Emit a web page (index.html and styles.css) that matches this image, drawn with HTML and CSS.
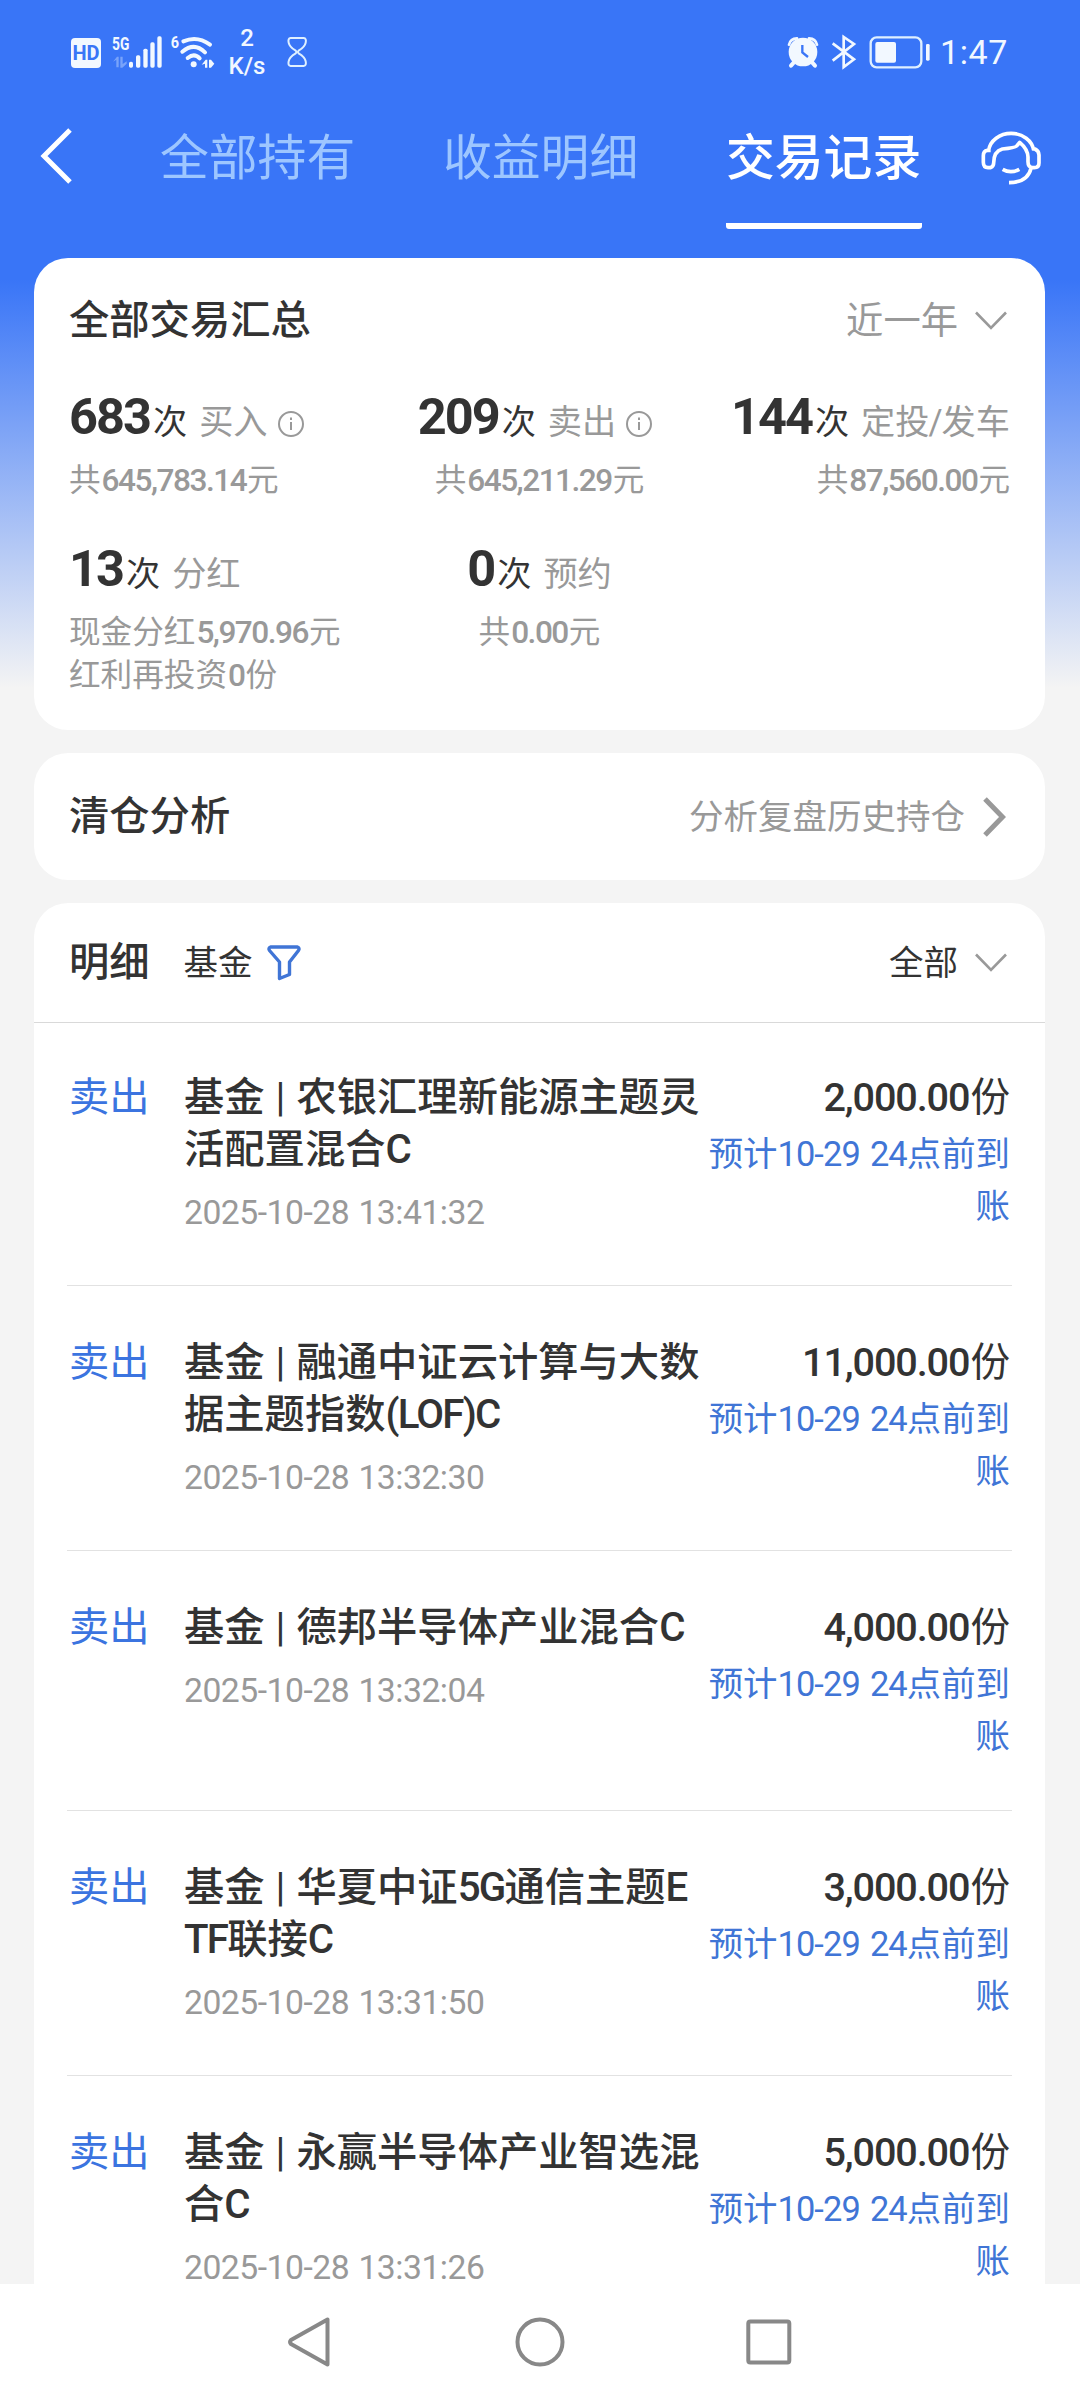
FILE: index.html
```html
<!DOCTYPE html>
<html lang="zh-CN">
<head>
<meta charset="utf-8">
<title>交易记录</title>
<link rel="stylesheet" href="styles.css">
</head>
<body>
<div class="screen">
  <div class="status">
    <div class="status-side">
      <span class="hd">HD</span>
      <svg class="signal" width="52" height="34" viewBox="212 74 156 102" fill="#f2f8ff">
        <text x="215" y="120" font-size="53" font-weight="700" textLength="52" lengthAdjust="spacingAndGlyphs">5G</text>
        <path d="M218 154l12-15h5v32h-7v-23zM240 139h7v22l12-8v7l-13 12h-6z" opacity=".35"/>
        <rect x="266" y="154" width="12" height="18" rx="5"/><rect x="287" y="135" width="13" height="37" rx="5"/><rect x="309" y="115" width="13" height="57" rx="5"/><rect x="330" y="96" width="13" height="76" rx="5"/><rect x="351" y="78" width="13" height="94" rx="5"/>
      </svg>
      <svg class="wifi" width="46" height="34" viewBox="390 74 138 102" fill="#f2f8ff">
        <text x="392" y="114" font-size="50" font-weight="700" textLength="25" lengthAdjust="spacingAndGlyphs">6</text>
        <path d="M430 93q42-18 80 10M427 124q36-30 68 2M443 143q20-16 36 1" fill="none" stroke="#f2f8ff" stroke-width="12" stroke-linecap="round"/>
        <circle cx="461" cy="162" r="9"/>
        <path d="M485 163l12-15h5v24h-7v-12zM507 148h6l10 12-10 12h-6z"/>
      </svg>
      <span class="speed"><span>2</span><span>K/s</span></span>
      <svg class="hourglass" width="22" height="32" viewBox="741 78 66 96" fill="none" stroke="#dff0ff" stroke-width="6"><path d="M755 84h39q9 1 6 14-3 13-20 23-6 5 0 10 17 10 20 23 3 13-6 14h-39q-9-1-6-14 3-13 20-23 6-5 0-10-17-10-20-23-3-13 6-14z"/></svg>
    </div>
    <div class="status-side status-right">
      <svg width="34" height="34" viewBox="81 74 102 102"><circle cx="132" cy="125" r="43" fill="#f2f8ff"/><path d="M90 103q4-18 24-19M174 103q-4-18-24-19" fill="none" stroke="#f2f8ff" stroke-width="8" stroke-linecap="round"/><path d="M104 157l-8 9M160 157l8 9" stroke="#f2f8ff" stroke-width="12" stroke-linecap="round"/><path d="M130 104v22l17 14" fill="none" stroke="#3975f7" stroke-width="7"/></svg>
      <svg class="bt" width="26" height="36" viewBox="213 74 78 108" fill="none" stroke="#f2f8ff" stroke-width="8"><path d="M218 102l64 48-31 23V83l31 21-64 50"/></svg>
      <svg class="battery" width="62" height="34" viewBox="325 75 186 102"><rect x="330" y="82" width="152" height="90" rx="18" fill="none" stroke="#dff0ff" stroke-width="7"/><rect x="344" y="96" width="62" height="62" rx="6" fill="#f2f8ff"/><rect x="496" y="102" width="11" height="50" rx="4" fill="#f2f8ff"/></svg>
      <span class="clock">1:47</span>
    </div>
  </div>

  <div class="nav">
    <svg class="back" width="32" height="56" viewBox="0 0 32 56" fill="none" stroke="#fff" stroke-width="5"><path d="M30 2L4 28l26 26"/></svg>
    <div class="tabs">
      <span class="tab">全部持有</span>
      <span class="tab">收益明细</span>
      <span class="tab active">交易记录</span>
    </div>
    <svg class="service" width="62" height="60" viewBox="660 350 186 180" fill="none" stroke="#fff" stroke-width="11" stroke-linejoin="round"><path d="M686 420a68 58 0 0 1 135 0M692 420h-10q-12 2-12 16v20q0 16 14 16h8q9-4 9-14 0-35 26-42 42-4 44-10l8-10q24 20 25 44v14q0 16 13 18h6q14 0 14-14v-24q0-12-12-18h-8M813 474q-10 42-66 43M728 477q24 14 50 0"/></svg>
  </div>

  <main class="cards">
    <section class="card summary">
      <div class="card-head">
        <h2>全部交易汇总</h2>
        <span class="period">近一年<svg class="down" width="32" height="20" viewBox="0 0 32 20"><path d="M1 1.500l15 15.500 15-15.500"/></svg></span>
      </div>
      <div class="stats">
        <div class="stat">
          <div class="line"><b>683</b><i>次</i>买入<svg class="info" width="28" height="28" viewBox="0 0 28 28"><circle cx="14" cy="14" r="12"/><path d="M14 12v8M14 7.500v2.500"/></svg></div>
          <div class="sum">共<span class="n">645,783.14</span>元</div>
        </div>
        <div class="stat mid">
          <div class="line"><b>209</b><i>次</i>卖出<svg class="info" width="28" height="28" viewBox="0 0 28 28"><circle cx="14" cy="14" r="12"/><path d="M14 12v8M14 7.500v2.500"/></svg></div>
          <div class="sum">共<span class="n">645,211.29</span>元</div>
        </div>
        <div class="stat end">
          <div class="line"><b>144</b><i>次</i>定投<span class="slash">/</span>发车</div>
          <div class="sum">共<span class="n">87,560.00</span>元</div>
        </div>
        <div class="stat">
          <div class="line"><b>13</b><i>次</i>分红</div>
          <div class="sum">现金分红<span class="n">5,970.96</span>元<br>红利再投资<span class="n">0</span>份</div>
        </div>
        <div class="stat mid">
          <div class="line"><b>0</b><i>次</i>预约</div>
          <div class="sum">共<span class="n">0.00</span>元</div>
        </div>
      </div>
    </section>

    <section class="card analysis">
      <h2>清仓分析</h2>
      <span class="more">分析复盘历史持仓<svg class="right" width="25" height="36" viewBox="0 0 25 36"><path d="M3 0l17.500 18L3 36"/></svg></span>
    </section>

    <section class="card detail">
      <div class="detail-head">
        <h2>明细</h2>
        <span class="kind">基金</span>
        <svg class="funnel" width="34" height="36" viewBox="0 0 34 36"><path d="M3.500 2h27q2.500 1 1 3.500L22.500 17v12.500L12.500 33.500V17L2.500 5.500Q1 3 3.500 2z"/></svg>
        <span class="all">全部<svg class="down" width="32" height="20" viewBox="0 0 32 20"><path d="M1 1.500l15 15.500 15-15.500"/></svg></span>
      </div>
      <div class="list">
        <div class="row">
          <span class="side">卖出</span>
          <div class="info-col"><div class="name">基金 <s>|</s> 农银汇理新能源主题灵<br>活配置混合<u>C</u></div><div class="time">2025-10-28 13:41:32</div></div>
          <div class="amt-col"><div class="amt"><b>2,000.00</b>份</div><div class="eta">预计<span>10-29 24</span>点前到<br>账</div></div>
        </div>
        <div class="row">
          <span class="side">卖出</span>
          <div class="info-col"><div class="name">基金 <s>|</s> 融通中证云计算与大数<br>据主题指数<u>(LOF)C</u></div><div class="time">2025-10-28 13:32:30</div></div>
          <div class="amt-col"><div class="amt"><b>11,000.00</b>份</div><div class="eta">预计<span>10-29 24</span>点前到<br>账</div></div>
        </div>
        <div class="row">
          <span class="side">卖出</span>
          <div class="info-col"><div class="name">基金 <s>|</s> 德邦半导体产业混合<u>C</u></div><div class="time">2025-10-28 13:32:04</div></div>
          <div class="amt-col"><div class="amt"><b>4,000.00</b>份</div><div class="eta">预计<span>10-29 24</span>点前到<br>账</div></div>
        </div>
        <div class="row">
          <span class="side">卖出</span>
          <div class="info-col"><div class="name">基金 <s>|</s> 华夏中证<u>5G</u>通信主题<u>E</u><br><u>TF</u>联接<u>C</u></div><div class="time">2025-10-28 13:31:50</div></div>
          <div class="amt-col"><div class="amt"><b>3,000.00</b>份</div><div class="eta">预计<span>10-29 24</span>点前到<br>账</div></div>
        </div>
        <div class="row">
          <span class="side">卖出</span>
          <div class="info-col"><div class="name">基金 <s>|</s> 永赢半导体产业智选混<br>合<u>C</u></div><div class="time">2025-10-28 13:31:26</div></div>
          <div class="amt-col"><div class="amt"><b>5,000.00</b>份</div><div class="eta">预计<span>10-29 24</span>点前到<br>账</div></div>
        </div>
      </div>
    </section>
  </main>

  <div class="sysnav">
    <svg width="46" height="52" viewBox="0 0 46 52"><path d="M39.500 3.500v45L3 28q-2-2 0-4z"/></svg>
    <svg width="52" height="52" viewBox="0 0 52 52"><circle cx="26" cy="26" r="22.500"/></svg>
    <svg width="46" height="52" viewBox="0 0 46 52"><rect x="2.300" y="5.500" width="41" height="41" rx="2"/></svg>
  </div>
</div>
</body>
</html>
```
FILE: styles.css
```css
* { box-sizing: border-box; }
body {
  margin: 0;
  font-family: Roboto, "Noto Sans CJK SC", sans-serif;
  color: #333;
}
svg { display: block; flex: none; overflow: visible; }
h2, b, i { margin: 0; font-style: normal; font-weight: 500; }
s, u { text-decoration: none; }

.screen {
  width: 1080px;
  height: 2400px;
  overflow: hidden;
  display: flex;
  flex-direction: column;
  background: linear-gradient(#3975f7 0, #3975f7 280px, #f4f4f4 688px);
}

/* status bar */
.status {
  flex: none;
  height: 104px;
  padding: 0 72px 0 71px;
  display: flex;
  justify-content: space-between;
  color: #f2f8ff;
}
.status-side { display: flex; align-items: center; }
.hd {
  width: 30px;
  height: 30px;
  margin-top: 2px;
  border-radius: 4px;
  background: #f2f8ff;
  color: #3975f7;
  font: 700 20px/31px Roboto, sans-serif;
  text-align: center;
}
.signal { margin-left: 10px; }
.wifi { margin-left: 7px; }
.speed {
  width: 38px;
  margin-left: 12px;
  display: flex;
  flex-direction: column;
  align-items: center;
  font-size: 24px;
  font-weight: 500;
  line-height: 28px;
}
.hourglass { margin-left: 20px; }
.bt { margin-left: 11px; }
.battery { margin-left: 12px; }
.clock { margin-left: 9px; font-size: 34px; line-height: 40px; letter-spacing: .6px; }

/* page navigation */
.nav {
  flex: none;
  height: 154px;
  padding: 0 38px 0 40px;
  display: flex;
  align-items: flex-start;
}
.back { margin-top: 24px; }
.tabs { display: flex; gap: 87px; margin-left: 88px; }
.tab {
  width: 196px;
  height: 125px;
  font-size: 48.8px;
  line-height: 109px;
  white-space: nowrap;
  color: #9dc6ff;
}
.active { color: #fff; font-weight: 500; border-bottom: 6px solid #fff; border-radius: 3px; }
.service { margin: 23px 0 0 auto; }

/* cards */
.cards { flex: 1; min-height: 0; padding: 0 35px 0 34px; display: flex; flex-direction: column; gap: 23px; overflow: hidden; }
.card { flex: none; background: #fff; border-radius: 34px; padding: 0 35px; }
h2 { font-size: 40.3px; line-height: 52px; padding-top: 1px; }
.down, .right { margin-right: 3px; }
.down path, .right path { fill: none; stroke: #999; stroke-width: 2.6; }
.right path { stroke-width: 5; }

.summary { height: 472px; padding-top: 36px; }
.card-head { display: flex; align-items: center; justify-content: space-between; }
.period { display: flex; align-items: center; gap: 17px; font-size: 37.3px; line-height: 52px; color: #999; }
.stats { display: grid; grid-template-columns: repeat(3, 1fr); margin-top: 40px; white-space: nowrap; }
.stat { height: 152px; }
.line { display: flex; align-items: baseline; font-size: 34.2px; line-height: 60px; color: #999; }
.line b { color: #333; font-size: 50.5px; font-weight: 700; letter-spacing: -2px; }
.line i { color: #333; font-weight: 400; margin: 0 12px 0 3px; }
.slash { margin: 0 -1px; }
.info { align-self: center; margin: 8px 8px 0 9px; fill: none; stroke: #999; stroke-width: 2; }
.sum { margin-top: 7px; font-size: 31.6px; line-height: 43px; color: #999; }
.n { letter-spacing: -1.5px; font-weight: 500; padding: 0 1px; }
.mid .line { justify-content: center; }
.mid .sum { text-align: center; }
.end .line { justify-content: flex-end; }
.end .sum { text-align: right; }

.analysis { height: 127px; display: flex; align-items: center; justify-content: space-between; }
.more { display: flex; align-items: center; gap: 17px; font-size: 34.5px; line-height: 52px; color: #999; }

.detail { padding: 0; }
.detail-head { height: 120px; padding: 0 35px; display: flex; align-items: center; border-bottom: 1px solid #d9d9d9; }
.kind { margin-left: 34px; font-size: 34.5px; line-height: 52px; }
.funnel { margin-left: 14px; fill: none; stroke: #4075d6; stroke-width: 3.4; stroke-linejoin: round; }
.all { margin-left: auto; display: flex; align-items: center; gap: 17px; font-size: 34.5px; line-height: 52px; }

.list { padding: 0 33px; }
.row { display: flex; padding: 51px 2px 48px; border-bottom: 1px solid #e2e2e2; white-space: nowrap; }
.row:first-child { padding-top: 49px; }
.side { width: 115px; font-size: 40.3px; line-height: 52px; color: #3b74e0; }
.name { font-size: 40.3px; line-height: 52px; font-weight: 500; }
.name s { font-weight: 400; margin: 0 1px; }
.name u { letter-spacing: -1.8px; }
.time { margin-top: 13px; font-size: 33.7px; line-height: 48px; letter-spacing: -.5px; word-spacing: 1.5px; color: #999; }
.amt-col { margin-left: auto; text-align: right; }
.amt { font-size: 39.6px; line-height: 52px; }
.amt b { letter-spacing: -1.1px; margin-right: 1px; }
.eta { margin-top: 4px; font-size: 34.4px; line-height: 52px; color: #4075d6; }
.eta span { letter-spacing: -.9px; word-spacing: 2.5px; }

/* system navigation */
.sysnav { flex: none; height: 116px; display: flex; align-items: center; justify-content: center; gap: 180px; background: #fff; }
.sysnav svg { fill: none; stroke: #888; stroke-width: 4; stroke-linejoin: round; }
```
